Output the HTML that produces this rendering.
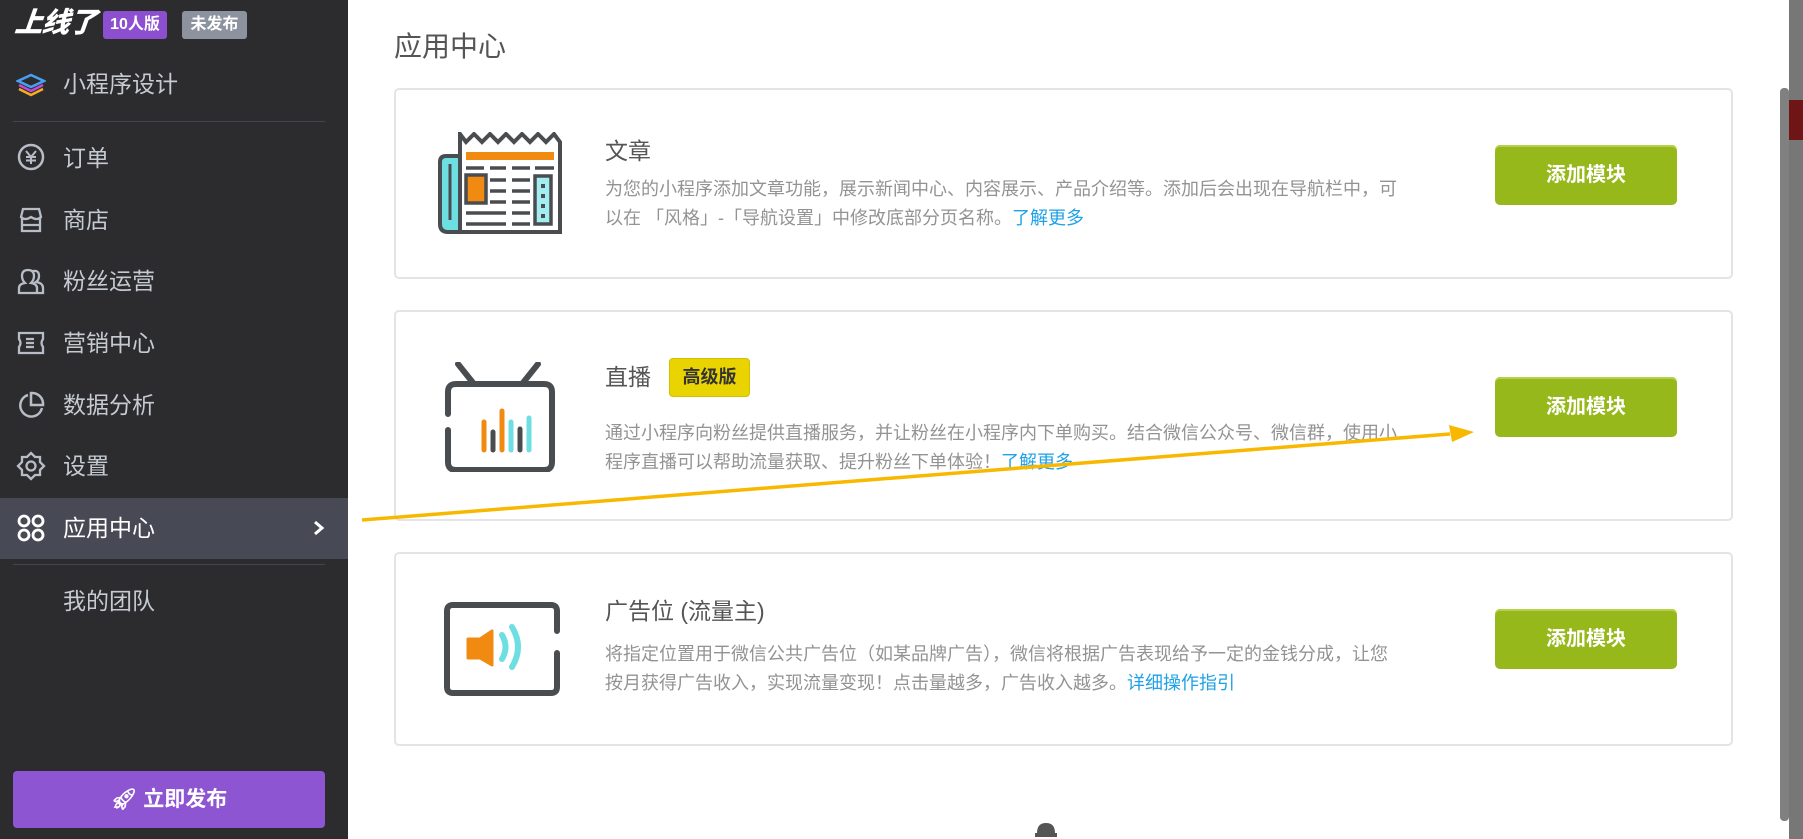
<!DOCTYPE html>
<html><head><meta charset="utf-8">
<style>
*{margin:0;padding:0;box-sizing:border-box}
body{width:1803px;height:839px;overflow:hidden;background:#fff;position:relative;font-family:"Liberation Sans","Noto Sans CJK SC",sans-serif}
.sb{position:absolute;left:0;top:0;width:348px;height:839px;background:#2c2c2e}
.abs{position:absolute}
.nav{position:absolute;left:63px;font-size:23px;color:#c6cad3;line-height:30px}
.ic{position:absolute;left:16px}
.card{position:absolute;left:394px;width:1339px;border:2px solid #e4e4e6;border-radius:5px;background:#fff}
.t{position:absolute;left:605px;font-size:23px;color:#555;line-height:30px}
.d{position:absolute;left:605px;font-size:18px;color:#939393;line-height:29px;width:830px}
.d a{color:#1ea1e6;text-decoration:none}
.btn{position:absolute;left:1495px;width:182px;height:60px;background:#96b81b;border-radius:5px;color:#fff;font-weight:bold;font-size:20px;text-align:center;line-height:60px;box-shadow:inset 0 2px 0 #b5d04a}
</style></head><body>
<div class="sb">
  <div class="abs" style="left:15px;top:6px;font-size:28px;font-weight:900;font-style:italic;color:#fff;line-height:34px;letter-spacing:-1px;transform:skewX(-6deg)">上线了</div>
  <div class="abs" style="left:103px;top:11px;width:64px;height:28px;background:#8c4fd0;border-radius:3px;color:#fff;font-size:16px;font-weight:bold;text-align:center;line-height:28px">10人版</div>
  <div class="abs" style="left:182px;top:11px;width:65px;height:28px;background:#8d939e;border-radius:3px;color:#fff;font-size:16px;font-weight:bold;text-align:center;line-height:28px">未发布</div>
  <svg class="ic" style="top:70px" width="30" height="30" viewBox="0 0 30 30"><path d="M15 17 L28 11 L15 5 L2 11 Z" fill="none" stroke="#4aa0f0" stroke-width="2.5"/><path d="M3 15 L15 21 L27 15" fill="none" stroke="#c04ad8" stroke-width="2.5"/><path d="M3 19 L15 25 L27 19" fill="none" stroke="#f5b020" stroke-width="2.5"/></svg>
  <div class="nav" style="top:69px">小程序设计</div>
  <div class="abs" style="left:13px;top:121px;width:312px;height:1px;background:#44454a"></div>
  <svg class="ic" style="top:142px" width="30" height="30" viewBox="0 0 30 30"><circle cx="15" cy="15" r="12" fill="none" stroke="#b7bcc6" stroke-width="2.5"/><path d="M10 9 L15 15 L20 9 M15 15 V22 M10 15 H20 M10 18.5 H20" fill="none" stroke="#b7bcc6" stroke-width="2"/></svg>
  <div class="nav" style="top:143px">订单</div>
  <svg class="ic" style="top:205px" width="30" height="30" viewBox="0 0 30 30"><path d="M5 12 L7 4 H23 L25 12 Q21 16 15 12 Q9 16 5 12 Z M6 13 V26 H24 V13 M6 20 H24" fill="none" stroke="#b7bcc6" stroke-width="2.3"/></svg>
  <div class="nav" style="top:205px">商店</div>
  <svg class="ic" style="top:266px" width="30" height="30" viewBox="0 0 30 30"><path d="M3 27 V22 Q3 18 9 17 Q6 14 6 10 Q6 4 12 4 Q18 4 18 10 Q18 14 15 17 Q21 18 21 22 V27 Z M17 5 Q23 4 23 10 Q23 14 20 16 Q27 17 27 22 V27 H22" fill="none" stroke="#b7bcc6" stroke-width="2.3"/></svg>
  <div class="nav" style="top:266px">粉丝运营</div>
  <svg class="ic" style="top:328px" width="30" height="30" viewBox="0 0 30 30"><path d="M3 5 H27 V11 Q24 15 27 19 V25 H3 V19 Q6 15 3 11 Z M10 11 H18 M10 15 H18 M10 19 H18" fill="none" stroke="#b7bcc6" stroke-width="2.3"/></svg>
  <div class="nav" style="top:328px">营销中心</div>
  <svg class="ic" style="top:390px" width="30" height="30" viewBox="0 0 30 30"><path d="M12 5 A11 11 0 1 0 26 18" fill="none" stroke="#b7bcc6" stroke-width="2.5"/><path d="M15 3 A11 11 0 0 1 27 15 H15 Z" fill="none" stroke="#b7bcc6" stroke-width="2.5"/></svg>
  <div class="nav" style="top:390px">数据分析</div>
  <svg class="ic" style="top:451px" width="30" height="30" viewBox="0 0 30 30"><path d="M15 2 L19 6 H24 V11 L28 15 L24 19 V24 H19 L15 28 L11 24 H6 V19 L2 15 L6 11 V6 H11 Z" fill="none" stroke="#b7bcc6" stroke-width="2.3"/><circle cx="15" cy="15" r="4.5" fill="none" stroke="#b7bcc6" stroke-width="2.3"/></svg>
  <div class="nav" style="top:451px">设置</div>
  <div class="abs" style="left:0;top:498px;width:348px;height:61px;background:#474a55"></div>
  <svg class="ic" style="top:513px" width="30" height="30" viewBox="0 0 30 30"><g fill="none" stroke="#fff" stroke-width="2.8"><circle cx="8" cy="8" r="5"/><circle cx="22" cy="8" r="5"/><circle cx="8" cy="22" r="5"/><circle cx="22" cy="22" r="5"/></g></svg>
  <div class="nav" style="top:513px;color:#fff">应用中心</div>
  <svg class="abs" style="left:312px;top:519px" width="14" height="18" viewBox="0 0 14 18"><path d="M3 3 L10 9 L3 15" fill="none" stroke="#fff" stroke-width="3"/></svg>
  <div class="abs" style="left:13px;top:564px;width:312px;height:1px;background:#44454a"></div>
  <div class="nav" style="top:586px">我的团队</div>
  <div class="abs" style="left:13px;top:771px;width:312px;height:57px;background:#8e55d2;border-radius:4px;color:#fff;font-weight:bold;font-size:21px;text-align:center;line-height:57px">🚀&#xFE0E; 立即发布</div>
</div>

<div class="abs" style="left:394px;top:29px;font-size:28px;color:#555;line-height:36px">应用中心</div>

<div class="card" style="top:88px;height:191px"></div>
<div class="card" style="top:310px;height:211px"></div>
<div class="card" style="top:552px;height:194px"></div>

<svg class="abs" style="left:438px;top:132px" width="126" height="104" viewBox="0 0 126 104">
<path d="M8 24 H22 V100 H10 Q2 100 2 92 V30 Q2 24 8 24 Z" fill="#6ddfe3" stroke="#4a4d50" stroke-width="4"/>
<path d="M12 32 V88" stroke="#4a4d50" stroke-width="3"/>
<path d="M22 100 H122 V10 L116 2 L108 10 L100 2 L92 10 L84 2 L76 10 L68 2 L60 10 L52 2 L44 10 L36 2 L28 10 L22 2 Z" fill="#fff" stroke="#4a4d50" stroke-width="4" stroke-linejoin="miter"/>
<rect x="28" y="20" width="88" height="8" fill="#f08a10"/>
<g stroke="#4a4d50" stroke-width="3.5"><path d="M28 36 H46 M52 36 H68 M74 36 H92 M97 36 H116 M52 48 H68 M52 59 H68 M52 70 H68 M28 81 H68 M28 92 H68 M74 48 H92 M74 59 H92 M74 70 H92 M74 81 H92 M74 92 H92"/></g>
<rect x="28" y="43" width="20" height="28" fill="#f08a10" stroke="#4a4d50" stroke-width="3.5"/>
<rect x="97" y="44" width="16" height="48" fill="#a3eef0" stroke="#4a4d50" stroke-width="3.5"/>
<g fill="#4a4d50"><rect x="103" y="52" width="4" height="4"/><rect x="103" y="62" width="4" height="4"/><rect x="103" y="72" width="4" height="4"/><rect x="103" y="82" width="4" height="4"/></g>
</svg>
<div class="t" style="top:136px">文章</div>
<div class="d" style="top:175px">为您的小程序添加文章功能，展示新闻中心、内容展示、产品介绍等。添加后会出现在导航栏中，可<br>以在 「风格」-「导航设置」中修改底部分页名称。<a>了解更多</a></div>
<div class="btn" style="top:145px">添加模块</div>

<svg class="abs" style="left:440px;top:362px" width="120" height="110" viewBox="0 0 120 110">
<path d="M18 2 L34 22 M98 2 L82 22" stroke="#4a4d50" stroke-width="6" stroke-linecap="round"/>
<path d="M8 52 V30 Q8 22 16 22 H104 Q112 22 112 30 V100 Q112 108 104 108 H16 Q8 108 8 100 V68" fill="none" stroke="#4a4d50" stroke-width="6" stroke-linecap="round"/>
<g stroke-width="5" stroke-linecap="round"><path d="M44 60 V88" stroke="#f08a10"/><path d="M53 70 V88" stroke="#4a4d50"/><path d="M62 49 V88" stroke="#f08a10"/><path d="M71 60 V88" stroke="#6ddfe3"/><path d="M80 67 V88" stroke="#4a4d50"/><path d="M89 56 V88" stroke="#6ddfe3"/></g>
</svg>
<div class="t" style="top:362px">直播</div>
<div class="abs" style="left:669px;top:358px;width:81px;height:39px;background:#e9d300;border:1px solid #d6bf00;border-radius:4px;font-size:18px;font-weight:bold;color:#333;text-align:center;line-height:37px">高级版</div>
<div class="d" style="top:419px">通过小程序向粉丝提供直播服务，并让粉丝在小程序内下单购买。结合微信公众号、微信群，使用小<br>程序直播可以帮助流量获取、提升粉丝下单体验！<a>了解更多</a></div>
<div class="btn" style="top:377px">添加模块</div>

<svg class="abs" style="left:442px;top:601px" width="120" height="98" viewBox="0 0 120 98">
<path d="M115 30 V10 Q115 4 109 4 H11 Q5 4 5 10 V86 Q5 92 11 92 H109 Q115 92 115 86 V52" fill="none" stroke="#4a4d50" stroke-width="6" stroke-linecap="round"/>
<path d="M26 38 H38 L50 30 V64 L38 57 H26 Z" fill="#f08a10" stroke="#f08a10" stroke-width="3" stroke-linejoin="round"/>
<path d="M60 34 Q67 46 60 58 M70 26 Q82 46 70 66" fill="none" stroke="#6ddfe3" stroke-width="6" stroke-linecap="round"/>
</svg>
<div class="t" style="top:596px">广告位 (流量主)</div>
<div class="d" style="top:640px">将指定位置用于微信公共广告位（如某品牌广告），微信将根据广告表现给予一定的金钱分成，让您<br>按月获得广告收入，实现流量变现！点击量越多，广告收入越多。<a>详细操作指引</a></div>
<div class="btn" style="top:609px">添加模块</div>

<svg class="abs" style="left:0;top:0" width="1803" height="839">
<line x1="362" y1="520" x2="1450" y2="434" stroke="#f8b800" stroke-width="3.5"/>
<path d="M1474 432 L1449 425 L1452 442 Z" fill="#f8b800"/>
</svg>

<svg class="abs" style="left:1033px;top:821px" width="26" height="18" viewBox="0 0 26 18"><path d="M4 12 Q4 2 13 2 Q22 2 22 12 Z" fill="#555"/><rect x="2" y="12" width="22" height="4" fill="#555"/></svg>

<div class="abs" style="left:1780px;top:88px;width:9px;height:733px;background:#808080;border-radius:4px"></div>
<div class="abs" style="left:1789px;top:0;width:14px;height:839px;background:#777"></div>
<div class="abs" style="left:1789px;top:100px;width:14px;height:40px;background:#701515"></div>
</body></html>
